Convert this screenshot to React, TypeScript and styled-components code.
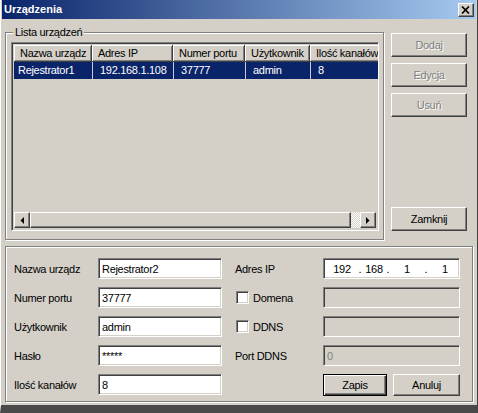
import React, { FC } from 'react';
import styled, { createGlobalStyle, css } from 'styled-components';

const face = '#d4d0c8';
const shadow = '#808080';
const dark = '#404040';
const navy = '#0a246a';

const GlobalStyle = createGlobalStyle`
  body {
    margin: 0;
    background: ${face};
  }
  * {
    box-sizing: border-box;
  }
  body, button, input {
    font-family: "Liberation Sans", Arial, sans-serif;
    font-size: 11px;
    letter-spacing: -0.3px;
    color: #000;
  }
`;

const raised = css`
  border: 1px solid;
  border-color: #fff ${dark} ${dark} #fff;
  box-shadow: inset -1px -1px ${shadow};
`;

const sunken = css`
  border: 1px solid;
  border-color: ${shadow} #fff #fff ${shadow};
  box-shadow: inset 1px 1px ${dark}, inset -1px -1px ${face};
`;

const etched = css`
  border: 1px solid ${shadow};
  box-shadow: inset 1px 1px #fff, 1px 1px #fff;
`;

const columns = [
  { title: 'Nazwa urządz', width: 78, value: 'Rejestrator1' },
  { title: 'Adres IP', width: 81, value: '192.168.1.108' },
  { title: 'Numer portu', width: 72, value: '37777' },
  { title: 'Użytkownik', width: 65, value: 'admin' },
  { title: 'Ilość kanałów', width: 90, value: '8' }
];

export default function App() {
  return (
    <>
      <GlobalStyle />
      <Window>
        <TitleBar>
          <span>Urządzenia</span>
          <CloseButton>
            <svg width="9" height="8" viewBox="0 0 9 8">
              <path d="M1 0.5 L8 7.5 M8 0.5 L1 7.5" stroke="#000" strokeWidth="1.7" />
            </svg>
          </CloseButton>
        </TitleBar>
        <Body>
          <TopRow>
            <GroupBox>
              <Legend>Lista urządzeń</Legend>
              <ListView>
                <Header>
                  {columns.map((c) => (
                    <HeaderCell key={c.title} $width={c.width}>
                      {c.title}
                    </HeaderCell>
                  ))}
                </Header>
                <Row>
                  {columns.map((c, i) => (
                    <RowCell key={c.title} $width={c.width} $first={i === 0}>
                      {c.value}
                    </RowCell>
                  ))}
                </Row>
                <Filler />
                <ScrollBar>
                  <ArrowButton>
                    <svg width="4" height="7" viewBox="0 0 4 7">
                      <polygon points="4,0 4,7 0.5,3.5" fill="#000" />
                    </svg>
                  </ArrowButton>
                  <Thumb />
                  <Track />
                  <ArrowButton>
                    <svg width="4" height="7" viewBox="0 0 4 7">
                      <polygon points="0,0 0,7 3.5,3.5" fill="#000" />
                    </svg>
                  </ArrowButton>
                </ScrollBar>
              </ListView>
            </GroupBox>
            <ButtonColumn>
              <SideButton disabled>Dodaj</SideButton>
              <SideButton disabled>Edycja</SideButton>
              <SideButton disabled>Usuń</SideButton>
              <SideButton $bottom>Zamknij</SideButton>
            </ButtonColumn>
          </TopRow>

          <Panel>
            <Label>Nazwa urządz</Label>
            <Field>Rejestrator2</Field>
            <RightLabel>Adres IP</RightLabel>
            <Field>
              <IpSeg $width={30}>192</IpSeg>
              <IpDot>.</IpDot>
              <IpSeg $width={22}>168</IpSeg>
              <IpDot>.</IpDot>
              <IpSeg $width={32}>1</IpSeg>
              <IpDot>.</IpDot>
              <IpSeg $width={32}>1</IpSeg>
            </Field>

            <Label>Numer portu</Label>
            <Field>37777</Field>
            <RightLabel>
              <CheckBox />
              Domena
            </RightLabel>
            <Field $disabled />

            <Label>Użytkownik</Label>
            <Field>admin</Field>
            <RightLabel>
              <CheckBox />
              DDNS
            </RightLabel>
            <Field $disabled />

            <Label>Hasło</Label>
            <Field>*****</Field>
            <RightLabel>Port DDNS</RightLabel>
            <Field $disabled $grey>
              0
            </Field>

            <Label>Ilość kanałów</Label>
            <Field>8</Field>
            <span />
            <ActionRow>
              <DialogButton $default $width={64}>
                Zapis
              </DialogButton>
              <DialogButton $width={67}>Anuluj</DialogButton>
            </ActionRow>
          </Panel>
        </Body>
      </Window>
    </>
  );
}

const Window = styled.div`
  width: 478px;
  height: 413px;
  display: flex;
  flex-direction: column;
  background: ${face};
  border-left: 1px solid #fff;
  border-right: 1px solid ${dark};
  border-bottom: 8px solid #4a4a4a;
  padding: 0 1px;
`;

const TitleBar = styled.div`
  height: 19px;
  flex-shrink: 0;
  display: flex;
  justify-content: space-between;
  padding: 0 2px 0 2px;
  background: linear-gradient(to right, ${navy}, #a6caf0);
  color: #fff;
  font-weight: bold;
  letter-spacing: 0;
  line-height: 19px;
`;

const CloseButton = styled.div`
  ${raised};
  width: 16px;
  height: 14px;
  margin-top: 3px;
  background: ${face};
  display: flex;
  align-items: center;
  justify-content: center;
  padding-right: 1px;
`;

const Body = styled.div`
  padding: 7px 3px 0 3px;
`;

const TopRow = styled.div`
  display: flex;
  gap: 7px;
`;

const GroupBox = styled.fieldset`
  ${etched};
  width: 379px;
  height: 214px;
  margin: 0;
  padding: 3px 4px 0 5px;
`;

const Legend = styled.legend`
  margin-left: 2px;
  padding: 0 2px;
  line-height: 13px;
  background: ${face};
`;

const ListView = styled.div`
  ${sunken};
  width: 368px;
  height: 189px;
  padding: 2px;
  display: flex;
  flex-direction: column;
  overflow: hidden;
  background: ${face};
`;

const Header = styled.div`
  display: flex;
  height: 17px;
  flex-shrink: 0;
`;

const HeaderCell = styled.div<{ $width: number }>`
  flex: 0 0 ${({ $width }) => $width}px;
  padding: 0 6px;
  line-height: 16px;
  white-space: nowrap;
  overflow: hidden;
  border-right: 1px solid ${dark};
  border-bottom: 1px solid ${dark};
  box-shadow: inset 1px 1px #fff, inset -1px -1px ${shadow};
`;

const Row = styled.div`
  display: flex;
  height: 17px;
  flex-shrink: 0;
`;

const RowCell = styled.div<{ $width: number; $first?: boolean }>`
  flex: 0 0 ${({ $width }) => $width}px;
  padding-left: ${({ $first }) => ($first ? 3 : 7)}px;
  line-height: 16px;
  white-space: nowrap;
  overflow: hidden;
  background: ${navy};
  color: #fff;
  border-left: 1px solid ${({ $first }) => ($first ? navy : '#c8c8d8')};
`;

const Filler = styled.div`
  flex: 1;
`;

const ScrollBar = styled.div`
  display: flex;
  height: 16px;
  flex-shrink: 0;
`;

const ArrowButton = styled.div`
  ${raised};
  width: 16px;
  height: 16px;
  flex-shrink: 0;
  display: flex;
  align-items: center;
  justify-content: center;
  background: ${face};
`;

const Thumb = styled.div`
  ${raised};
  width: 321px;
  height: 16px;
  flex-shrink: 0;
  background: ${face};
`;

const Track = styled.div`
  flex: 1;
  background: repeating-conic-gradient(#fff 0% 25%, ${face} 0% 50%) 0 0 / 2px 2px;
`;

const ButtonColumn = styled.div`
  width: 76px;
  display: flex;
  flex-direction: column;
  gap: 6px;
  padding: 7px 0 9px;
`;

const SideButton = styled.button<{ $bottom?: boolean }>`
  ${raised};
  height: 24px;
  padding: 0;
  background: ${face};
  margin-top: ${({ $bottom }) => ($bottom ? 'auto' : '0')};

  &:disabled {
    color: ${shadow};
    text-shadow: 1px 1px 0 #fff;
  }
`;

const Panel = styled.div`
  ${etched};
  width: 468px;
  height: 156px;
  margin-top: 6px;
  padding: 11px 11px 0 8px;
  display: grid;
  grid-template-columns: 84px 124px 101px 137px;
  grid-auto-rows: 21px;
  row-gap: 8px;
  align-items: center;
`;

const Label = styled.div`
  white-space: nowrap;
`;

const RightLabel = styled.div`
  display: flex;
  align-items: center;
  gap: 4px;
  padding-left: 13px;
  white-space: nowrap;
`;

const CheckBox = styled.span`
  ${sunken};
  width: 13px;
  height: 13px;
  margin-left: 1px;
  background: #fff;
`;

const Field = styled.div<{ $disabled?: boolean; $grey?: boolean }>`
  ${sunken};
  height: 21px;
  padding: 0 3px;
  display: flex;
  align-items: center;
  white-space: nowrap;
  background: ${({ $disabled }) => ($disabled ? face : '#fff')};
  color: ${({ $grey }) => ($grey ? shadow : '#000')};
`;

const IpSeg = styled.span<{ $width: number }>`
  width: ${({ $width }) => $width}px;
  text-align: center;
  flex-shrink: 0;
`;

const IpDot = styled.span`
  width: 6px;
  text-align: center;
  flex-shrink: 0;
`;

const ActionRow = styled.div`
  display: flex;
  justify-content: space-between;
  align-self: start;
`;

const DialogButton = styled.button<{ $default?: boolean; $width: number }>`
  width: ${({ $width }) => $width}px;
  height: 22px;
  padding: 0;
  background: ${face};
  ${({ $default }) =>
    $default
      ? css`
          border: 1px solid #000;
          box-shadow: inset 1px 1px #fff, inset -1px -1px ${dark},
            inset -2px -2px ${shadow};
        `
      : raised};
`;
